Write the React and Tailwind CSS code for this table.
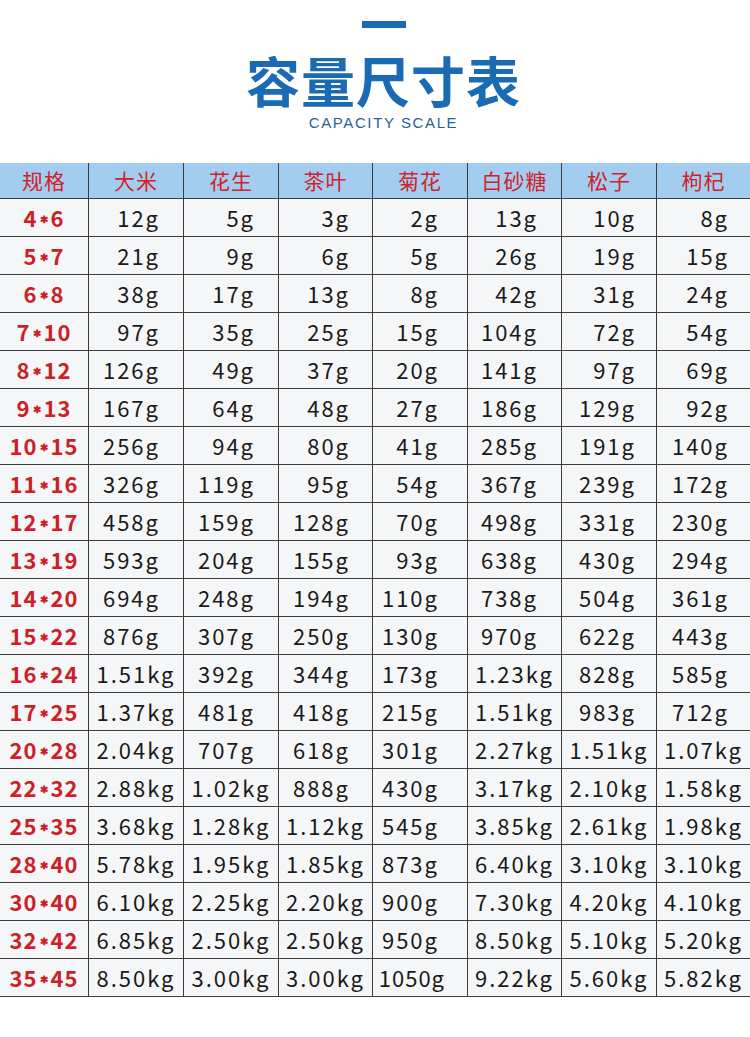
const headers = ['规格', '大米', '花生', '茶叶', '菊花', '白砂糖', '松子', '枸杞'];

const rows = [
  ['4*6', '12g', '5g', '3g', '2g', '13g', '10g', '8g'],
  ['5*7', '21g', '9g', '6g', '5g', '26g', '19g', '15g'],
  ['6*8', '38g', '17g', '13g', '8g', '42g', '31g', '24g'],
  ['7*10', '97g', '35g', '25g', '15g', '104g', '72g', '54g'],
  ['8*12', '126g', '49g', '37g', '20g', '141g', '97g', '69g'],
  ['9*13', '167g', '64g', '48g', '27g', '186g', '129g', '92g'],
  ['10*15', '256g', '94g', '80g', '41g', '285g', '191g', '140g'],
  ['11*16', '326g', '119g', '95g', '54g', '367g', '239g', '172g'],
  ['12*17', '458g', '159g', '128g', '70g', '498g', '331g', '230g'],
  ['13*19', '593g', '204g', '155g', '93g', '638g', '430g', '294g'],
  ['14*20', '694g', '248g', '194g', '110g', '738g', '504g', '361g'],
  ['15*22', '876g', '307g', '250g', '130g', '970g', '622g', '443g'],
  ['16*24', '1.51kg', '392g', '344g', '173g', '1.23kg', '828g', '585g'],
  ['17*25', '1.37kg', '481g', '418g', '215g', '1.51kg', '983g', '712g'],
  ['20*28', '2.04kg', '707g', '618g', '301g', '2.27kg', '1.51kg', '1.07kg'],
  ['22*32', '2.88kg', '1.02kg', '888g', '430g', '3.17kg', '2.10kg', '1.58kg'],
  ['25*35', '3.68kg', '1.28kg', '1.12kg', '545g', '3.85kg', '2.61kg', '1.98kg'],
  ['28*40', '5.78kg', '1.95kg', '1.85kg', '873g', '6.40kg', '3.10kg', '3.10kg'],
  ['30*40', '6.10kg', '2.25kg', '2.20kg', '900g', '7.30kg', '4.20kg', '4.10kg'],
  ['32*42', '6.85kg', '2.50kg', '2.50kg', '950g', '8.50kg', '5.10kg', '5.20kg'],
  ['35*45', '8.50kg', '3.00kg', '3.00kg', '1050g', '9.22kg', '5.60kg', '5.82kg'],
];

// right padding per value column for the plain "g" values
const padRight = ['pr-[23px]', 'pr-[23px]', 'pr-[22px]', 'pr-[28px]', 'pr-[23px]', 'pr-[20px]', 'pr-[21px]'];

const gridCols = 'grid grid-cols-[88px_95px_95px_94px_95px_94px_95px_94px]';
const cjk = "font-['Noto_Sans_CJK_SC','Noto_Sans',sans-serif]";

function Spec({ text }) {
  const [a, b] = text.split('*');
  return (
    <span className="flex items-center">
      {a}
      <span className="mx-[2px] mt-[2px] text-[10px] leading-none">✱</span>
      {b}
    </span>
  );
}

function ValueCell({ value, col }) {
  var align = 'justify-center';
  if (!value.endsWith('kg')) {
    align = value.length >= 5 ? 'justify-end pr-[22px] tracking-[1px]' : 'justify-end ' + padRight[col];
  }
  return (
    <div className={'flex items-center border-l border-[#3c3c3c] ' + align}>
      {value}
    </div>
  );
}

export default function App() {
  return (
    <div className={'w-[750px] h-[1037px] bg-white ' + cjk}>
      {/* Heading */}
      <div className="flex flex-col items-center pt-[21px] pl-[17px]">
        <div className="w-[44px] h-[7px] bg-[#1a6ab4]" />
        <h1 className="mt-[25px] text-[54px] leading-[54px] font-bold text-[#1a6ab4] tracking-[1px]">
          容量尺寸表
        </h1>
        <p className="mt-[7px] font-['Liberation_Sans',sans-serif] text-[15px] leading-[18px] tracking-[1.6px] text-[#2b5f9c]">
          CAPACITY SCALE
        </p>
      </div>

      {/* Table */}
      <div className="mt-[31px]">
        <div className={gridCols + ' h-[36px] bg-[#a3cdee] border-b border-[#3c3c3c] text-[21px] text-[#d1222b]'}>
          {headers.map(function (h, i) {
            return (
              <div
                key={h}
                className={'flex items-center justify-center tracking-[1px] ' + (i > 0 ? 'border-l border-[#3c3c3c]' : '')}
              >
                {h}
              </div>
            );
          })}
        </div>
        {rows.map(function (row) {
          return (
            <div
              key={row[0]}
              className={gridCols + ' h-[38px] bg-[#f5f6f8] border-b border-[#3c3c3c] text-[22px] text-[#1a1a1a] tracking-[2px]'}
            >
              <div className="flex items-center justify-center font-bold text-[#cc1f27] tracking-[1px]">
                <Spec text={row[0]} />
              </div>
              {row.slice(1).map(function (v, i) {
                return <ValueCell key={i} value={v} col={i} />;
              })}
            </div>
          );
        })}
      </div>
    </div>
  );
}
